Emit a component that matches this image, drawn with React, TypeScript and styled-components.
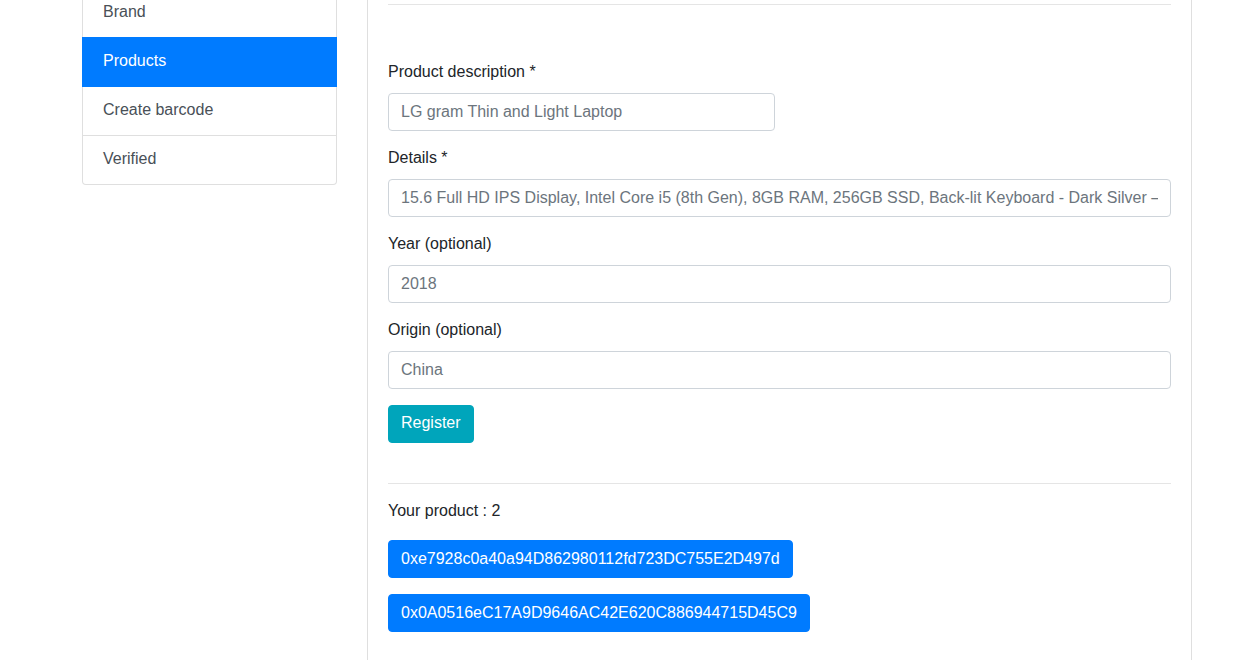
import React from "react";
import styled, { createGlobalStyle } from "styled-components";

const Global = createGlobalStyle`
  html, body { margin: 0; padding: 0; overflow: hidden; background: #fff; }
  body {
    font-family: "Liberation Sans", Arial, sans-serif;
    font-size: 16px;
    line-height: 1.5;
    color: #212529;
  }
  * { box-sizing: border-box; }
`;

const Page = styled.div`
  display: flex;
  align-items: flex-start;
  gap: 30px;
  padding-left: 82px;
  margin-top: -12px;
`;

const ListGroup = styled.nav`
  width: 255px;
  display: flex;
  flex-direction: column;
`;

const ListItem = styled.a<{ $active?: boolean; $first?: boolean; $last?: boolean }>`
  display: block;
  padding: 11px 20px 13px;
  margin-bottom: -1px;
  border: 1px solid ${(p) => (p.$active ? "#007bff" : "rgba(0,0,0,.125)")};
  background: ${(p) => (p.$active ? "#007bff" : "#fff")};
  color: ${(p) => (p.$active ? "#fff" : "#495057")};
  text-decoration: none;
  position: ${(p) => (p.$active ? "relative" : "static")};
  z-index: ${(p) => (p.$active ? 2 : "auto")};
  border-radius: ${(p) => (p.$last ? "0 0 4px 4px" : p.$first ? "4px 4px 0 0" : "0")};
`;

const Card = styled.section`
  width: 825px;
  min-height: 720px;
  margin-top: -21px;
  border: 1px solid rgba(0,0,0,.125);
  border-radius: 4px;
  padding: 20px;
  background: #fff;
`;

const Rule = styled.hr<{ $top?: number; $bottom?: number }>`
  margin: ${(p) => p.$top ?? 16}px 0 ${(p) => p.$bottom ?? 16}px;
  border: 0;
  border-top: 1px solid rgba(0,0,0,.1);
`;

const Form = styled.form`
  padding-top: 39px;
  margin-bottom: 0;
`;

const Group = styled.div`
  margin-bottom: 15px;
`;

const Label = styled.label`
  display: inline-block;
  margin-bottom: 9px;
`;

const Input = styled.input<{ $width?: number }>`
  display: block;
  width: ${(p) => (p.$width ? `${p.$width}px` : "100%")};
  height: 38px;
  padding: 6px 12px;
  font-family: inherit;
  font-size: 16px;
  line-height: 1.5;
  color: #495057;
  background: #fff;
  border: 1px solid #ced4da;
  border-radius: 4px;
  outline: none;
  &::placeholder { color: #6c757d; opacity: 1; }
`;

const Button = styled.button<{ $variant: "info" | "primary" }>`
  display: inline-block;
  height: 38px;
  padding: ${(p) => (p.$variant === "info" ? "5px 12px 7px" : "6px 12px")};
  margin-top: ${(p) => (p.$variant === "info" ? "1px" : "0")};
  font-family: inherit;
  font-size: 16px;
  line-height: 1.5;
  color: #fff;
  border: 1px solid ${(p) => (p.$variant === "info" ? "#00a5bb" : "#007bff")};
  background: ${(p) => (p.$variant === "info" ? "#00a5bb" : "#007bff")};
  border-radius: 4px;
  cursor: pointer;
`;

const Products = styled.div`
  display: flex;
  flex-direction: column;
  align-items: flex-start;
  gap: 16px;
`;

const Count = styled.p`
  margin: 0 0 1px;
`;

const addresses = [
  "0xe7928c0a40a94D862980112fd723DC755E2D497d",
  "0x0A0516eC17A9D9646AC42E620C886944715D45C9",
];

export default function App() {
  return (
    <>
      <Global />
      <Page>
        <ListGroup>
          <ListItem href="#" $first>Brand</ListItem>
          <ListItem href="#" $active>Products</ListItem>
          <ListItem href="#">Create barcode</ListItem>
          <ListItem href="#" $last>Verified</ListItem>
        </ListGroup>
        <Card>
          <Rule />
          <Form onSubmit={(e) => e.preventDefault()}>
            <Group>
              <Label>Product description *</Label>
              <Input $width={387} placeholder="LG gram Thin and Light Laptop" />
            </Group>
            <Group>
              <Label>Details *</Label>
              <Input placeholder="15.6 Full HD IPS Display, Intel Core i5 (8th Gen), 8GB RAM, 256GB SSD, Back-lit Keyboard - Dark Silver – 1.13kg" />
            </Group>
            <Group>
              <Label>Year (optional)</Label>
              <Input placeholder="2018" />
            </Group>
            <Group>
              <Label>Origin (optional)</Label>
              <Input placeholder="China" />
            </Group>
            <Button type="submit" $variant="info">Register</Button>
          </Form>
          <Rule $top={40} $bottom={15} />
          <Products>
            <Count>Your product : 2</Count>
            {addresses.map((a) => (
              <Button key={a} type="button" $variant="primary">{a}</Button>
            ))}
          </Products>
        </Card>
      </Page>
    </>
  );
}
